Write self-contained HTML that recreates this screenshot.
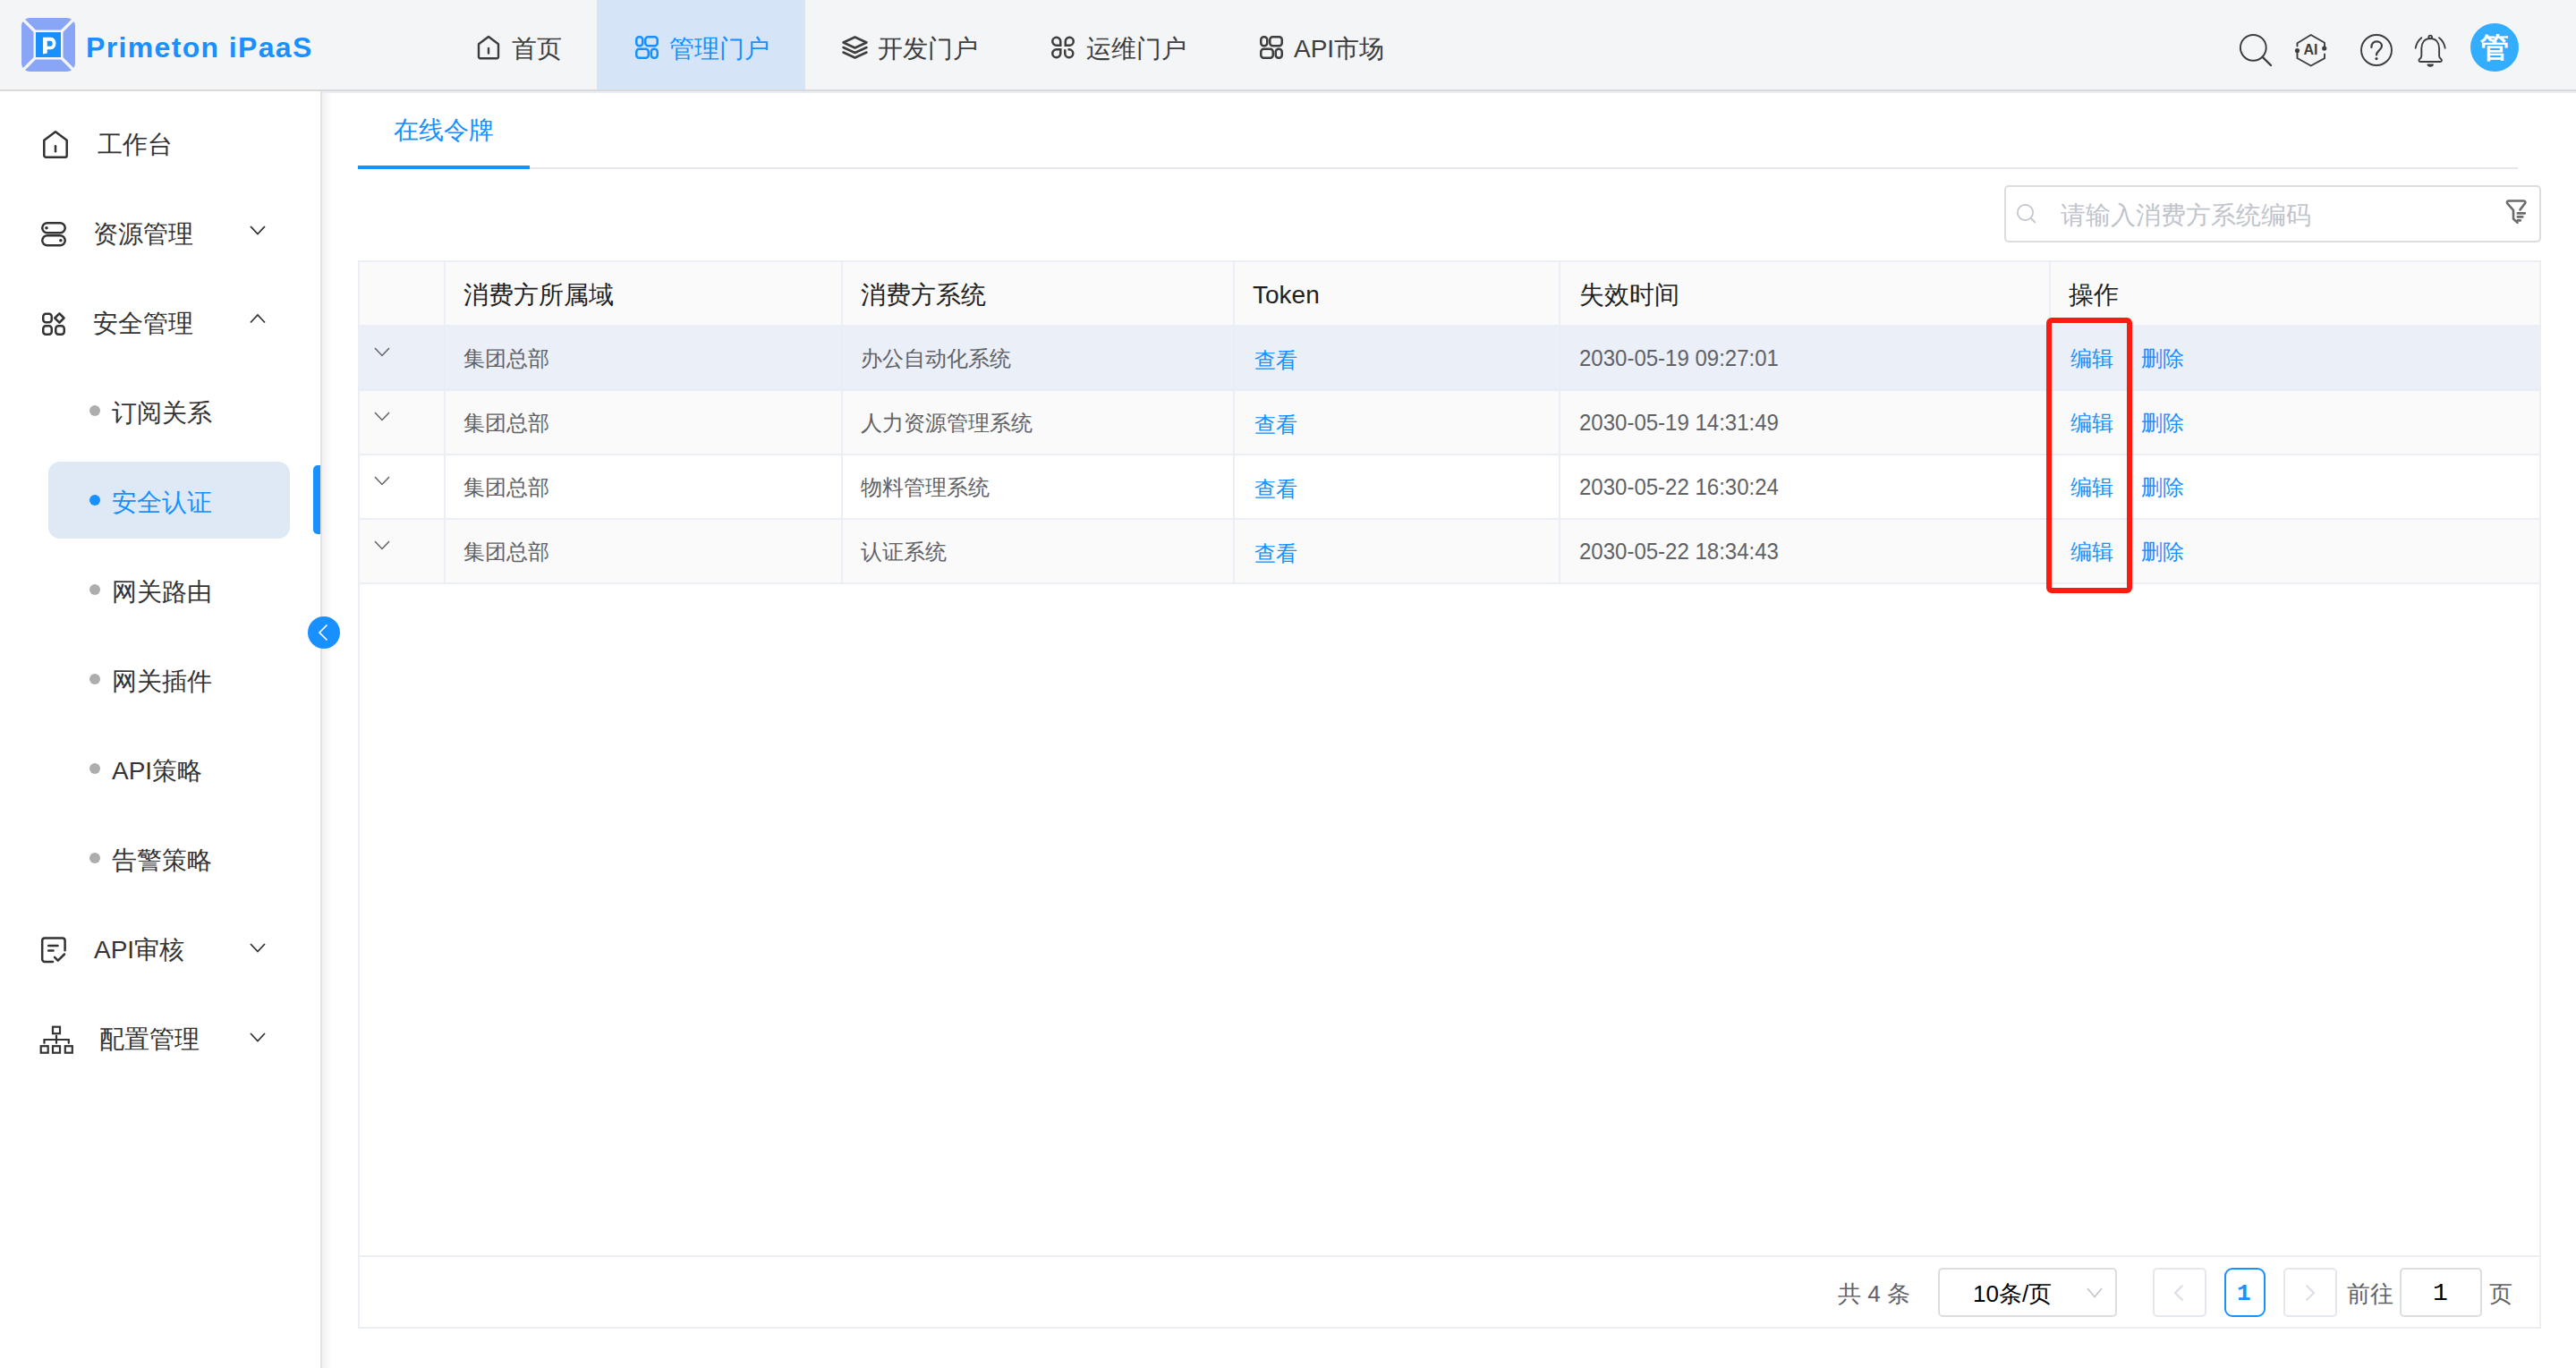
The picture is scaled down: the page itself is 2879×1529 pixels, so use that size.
<!DOCTYPE html>
<html><head><meta charset="utf-8">
<style>
*{margin:0;padding:0;box-sizing:border-box}
html,body{width:2879px;height:1529px;overflow:hidden;background:#fff;font-family:"Liberation Sans",sans-serif;color:#303133}
.abs{position:absolute}
.t{position:absolute;white-space:nowrap}
.f28{font-size:28px;line-height:28px}
.f24{font-size:24px;line-height:24px}
.f26{font-size:26px;line-height:26px}
.dot{position:absolute;width:12px;height:12px;border-radius:6px;background:#adadad}
svg{position:absolute;overflow:visible}
</style></head><body>

<div class="abs" style="left:0;top:0;width:2879px;height:100px;background:#f4f5f7"></div>
<div class="abs" style="left:0;top:100px;width:2879px;height:2px;background:#d9d9d9"></div>
<svg style="left:24px;top:20px" width="60" height="60" viewBox="0 0 60 60">
<rect x="0" y="0" width="60" height="60" rx="9" fill="#89a5f6"/>
<path d="M2 2 L58 58 M58 2 L2 58" stroke="#f4f5f7" stroke-width="3.2"/>
<rect x="13.5" y="13.5" width="33" height="33" fill="#f4f5f7"/>
<rect x="16" y="16" width="28" height="28" fill="#1890ff"/>
<path d="M24.1 21.8 H33 a5.5 6.7 0 0 1 0 13.4 H28.75 V39.6 L24.1 40.4 Z M28.75 25.7 V31.8 H32.2 a2.5 3.05 0 0 0 0 -6.1 Z" fill="#fff" fill-rule="evenodd"/>
</svg>
<div class="t" style="left:96px;top:37px;font-size:32px;line-height:32px;font-weight:bold;color:#1890ff;letter-spacing:1.35px">Primeton iPaaS</div>
<div class="abs" style="left:667px;top:0;width:233px;height:100px;background:#d5e5f7"></div>
<svg style="left:533px;top:39px" width="26" height="28" viewBox="0 0 26 28">
<path d="M2 10.2 L13 2 L24 10.2 V24.5 a1.8 1.8 0 0 1 -1.8 1.8 H3.8 a1.8 1.8 0 0 1 -1.8 -1.8 Z" fill="none" stroke="#3d3d3d" stroke-width="2.4" stroke-linejoin="round"/>
<path d="M13 15 V20.5" stroke="#3d3d3d" stroke-width="2.4" stroke-linecap="round"/>
</svg>
<div class="t f28" style="left:572px;top:41px;color:#3d3d3d">首页</div>
<svg style="left:710px;top:40px" width="26" height="26" viewBox="0 0 26 26">
<g fill="none" stroke="#1890ff" stroke-width="2.5">
<rect x="1.25" y="1.25" width="7" height="10" rx="3.2"/>
<rect x="11.25" y="1.25" width="13.5" height="10" rx="3.2"/>
<rect x="1.25" y="14.75" width="13.5" height="10" rx="3.2"/>
<rect x="17.75" y="14.75" width="7" height="10" rx="3.2"/>
</g></svg>
<div class="t f28" style="left:748px;top:41px;color:#1890ff">管理门户</div>
<svg style="left:941px;top:40px" width="29" height="26" viewBox="0 0 29 26">
<g fill="none" stroke="#3d3d3d" stroke-width="2.5" stroke-linejoin="round" stroke-linecap="round">
<path d="M14.5 1.5 L27.5 7.5 L14.5 13.5 L1.5 7.5 Z"/>
<path d="M1.5 13 L14.5 19 L27.5 13"/>
<path d="M1.5 18.5 L14.5 24.5 L27.5 18.5"/>
</g></svg>
<div class="t f28" style="left:981px;top:41px;color:#3d3d3d">开发门户</div>
<svg style="left:1175px;top:40px" width="26" height="26" viewBox="0 0 26 26">
<g fill="none" stroke="#3d3d3d" stroke-width="2.5" stroke-linejoin="round">
<path d="M11.5 10.75 H5.75 a4.5 4.5 0 1 1 4.5 -4.5 V10.75"/>
<path d="M14.5 10.75 H20.25 a4.5 4.5 0 1 0 -4.5 -4.5 V10.75" transform="translate(0,0)"/>
<path d="M11.5 15.25 H5.75 a4.5 4.5 0 1 0 4.5 4.5 V15.25"/>
<path d="M15.25 15.25 V19.75 a4.5 4.5 0 1 0 4.5 -4.5 H18.5"/>
</g></svg>
<div class="t f28" style="left:1214px;top:41px;color:#3d3d3d">运维门户</div>
<svg style="left:1408px;top:40px" width="26" height="26" viewBox="0 0 26 26">
<g fill="none" stroke="#3d3d3d" stroke-width="2.5">
<rect x="1.25" y="1.25" width="7" height="10" rx="3.2"/>
<rect x="11.25" y="1.25" width="13.5" height="10" rx="3.2"/>
<rect x="1.25" y="14.75" width="13.5" height="10" rx="3.2"/>
<rect x="17.75" y="14.75" width="7" height="10" rx="3.2"/>
</g></svg>
<div class="t f28" style="left:1446px;top:41px;color:#3d3d3d">API市场</div>
<svg style="left:2500px;top:35px" width="42" height="42" viewBox="0 0 42 42">
<circle cx="18.3" cy="18.3" r="14.4" fill="none" stroke="#3d3d3d" stroke-width="2"/>
<path d="M28.8 28.8 L38 38" stroke="#3d3d3d" stroke-width="2.4" stroke-linecap="round"/>
</svg>
<svg style="left:2562px;top:35px" width="42" height="42" viewBox="0 0 42 42">
<g fill="none" stroke="#3d3d3d" stroke-width="1.9" stroke-linecap="round" stroke-linejoin="round">
<path d="M5.5 16.5 V13.3 L20.7 4 L36 12.8 V19"/>
<path d="M36 25.5 V30.2 L20.7 38.5 L5.5 30 V22"/>
</g>
<circle cx="5.5" cy="21.5" r="2.6" fill="#3d3d3d"/>
<circle cx="35.7" cy="19" r="2.6" fill="#3d3d3d"/>
<text x="20.5" y="26" text-anchor="middle" font-family="Liberation Sans" font-weight="bold" font-size="16" fill="#3d3d3d">AI</text>
</svg>
<svg style="left:2635px;top:35px" width="42" height="42" viewBox="0 0 42 42">
<circle cx="21" cy="21" r="17" fill="none" stroke="#3d3d3d" stroke-width="1.9"/>
<path d="M15.4 18 C15.2 13.5 18 11.3 21.2 11.3 C24.5 11.3 27 13.5 27 16.3 C27 18.5 25.8 19.6 24 21.3 C22 23.2 21 24 21 26.5" fill="none" stroke="#3d3d3d" stroke-width="2.2" stroke-linecap="round"/>
<circle cx="21" cy="30.6" r="1.6" fill="#3d3d3d"/>
</svg>
<svg style="left:2695px;top:35px" width="42" height="42" viewBox="0 0 42 42">
<g fill="none" stroke="#3d3d3d" stroke-width="1.9" stroke-linecap="round" stroke-linejoin="round">
<path d="M11.3 7.2 C8 9.8 5.6 13.5 4.7 18.7"/>
<path d="M31.1 7.2 C34.4 9.8 36.8 13.5 37.7 18.7"/>
<path d="M21.2 8 C14.5 8 11.3 13 11.3 19 V27.5 C11.3 29 10.5 30 9.2 31 C7.8 32.3 8.4 34 10.2 34 H32.2 C34 34 34.6 32.3 33.2 31 C31.9 30 31.1 29 31.1 27.5 V19 C31.1 13 27.9 8 21.2 8 Z"/>
<circle cx="21.2" cy="6.4" r="1.8"/>
</g>
<path d="M17.5 36.5 H24.9 A3.7 3.3 0 0 1 17.5 36.5 Z" fill="#3d3d3d"/>
</svg>
<div class="abs" style="left:2761px;top:26px;width:54px;height:54px;border-radius:27px;background:#33adff"></div>
<div class="t" style="left:2772px;top:37px;font-size:32px;line-height:32px;font-weight:bold;color:#fff">管</div>
<div class="abs" style="left:358px;top:102px;width:2px;height:1427px;background:#e2e2e2"></div>
<div class="abs" style="left:360px;top:102px;width:11px;height:1427px;background:linear-gradient(to right,#f1f1f1,rgba(255,255,255,0))"></div>
<svg style="left:47px;top:145px" width="30" height="33" viewBox="0 0 30 33">
<path d="M2.3 11.8 L15 2.3 L27.7 11.8 V28.8 a2 2 0 0 1 -2 2 H4.3 a2 2 0 0 1 -2 -2 Z" fill="none" stroke="#333333" stroke-width="2.5" stroke-linejoin="round"/>
<path d="M15 18.3 V24.3" stroke="#333333" stroke-width="2.5" stroke-linecap="round"/>
</svg>
<div class="t f28" style="left:109px;top:148px;color:#333333">工作台</div>
<svg style="left:45px;top:248px" width="30" height="28" viewBox="0 0 30 28">
<g fill="none" stroke="#333333" stroke-width="2.5">
<rect x="2.25" y="1.25" width="25.5" height="11" rx="5.5"/>
<rect x="2.25" y="15.25" width="25.5" height="11" rx="5.5"/>
</g>
<circle cx="7" cy="6.8" r="1.8" fill="#333333"/>
<circle cx="22.9" cy="20.7" r="1.8" fill="#333333"/>
</svg>
<div class="t f28" style="left:104px;top:248px;color:#333333">资源管理</div>
<svg style="left:279px;top:252px" width="18" height="10" viewBox="0 0 18 10"><path d="M1 1 L9.0 9.5 L17 1" fill="none" stroke="#333" stroke-width="1.8"/></svg>
<svg style="left:45px;top:348px" width="30" height="28" viewBox="0 0 30 28">
<g fill="none" stroke="#333333" stroke-width="2.5">
<rect x="3.25" y="2.75" width="9.5" height="9.5" rx="3"/>
<rect x="3.25" y="16.25" width="9.5" height="9.5" rx="3"/>
<rect x="17.25" y="16.25" width="9.5" height="9.5" rx="3"/>
<path d="M21.4 2.4 L26.5 7.5 L21.4 12.6 L16.3 7.5 Z" stroke-linejoin="round"/>
</g></svg>
<div class="t f28" style="left:104px;top:348px;color:#333333">安全管理</div>
<svg style="left:279px;top:351px" width="18" height="10" viewBox="0 0 18 10"><path d="M1 9.5 L9.0 1 L17 9.5" fill="none" stroke="#333" stroke-width="1.8"/></svg>
<div class="abs" style="left:54px;top:516px;width:270px;height:86px;border-radius:13px;background:#dfe9f6"></div>
<div class="abs" style="left:350px;top:520px;width:8px;height:77px;border-radius:5px 0 0 5px;background:#1890ff"></div>
<div class="dot" style="left:100px;top:453px;background:#adadad"></div>
<div class="t f28" style="left:125px;top:448px;color:#333333">订阅关系</div>
<div class="dot" style="left:100px;top:553px;background:#1890ff"></div>
<div class="t f28" style="left:125px;top:548px;color:#1890ff">安全认证</div>
<div class="dot" style="left:100px;top:653px;background:#adadad"></div>
<div class="t f28" style="left:125px;top:648px;color:#333333">网关路由</div>
<div class="dot" style="left:100px;top:753px;background:#adadad"></div>
<div class="t f28" style="left:125px;top:748px;color:#333333">网关插件</div>
<div class="dot" style="left:100px;top:853px;background:#adadad"></div>
<div class="t f28" style="left:125px;top:848px;color:#333333">API策略</div>
<div class="dot" style="left:100px;top:953px;background:#adadad"></div>
<div class="t f28" style="left:125px;top:948px;color:#333333">告警策略</div>
<svg style="left:344px;top:689px" width="36" height="36" viewBox="0 0 36 36">
<circle cx="18" cy="18" r="18" fill="#1890ff"/>
<path d="M21.5 9.5 L13 18 L21.5 26.5" fill="none" stroke="#fff" stroke-width="1.7"/>
</svg>
<svg style="left:45px;top:1046px" width="30" height="32" viewBox="0 0 30 32">
<g fill="none" stroke="#333333" stroke-width="2.5" stroke-linecap="round" stroke-linejoin="round">
<path d="M14 29 H5 a2.8 2.8 0 0 1 -2.8 -2.8 V5.2 A2.8 2.8 0 0 1 5 2.4 H24.8 a2.8 2.8 0 0 1 2.8 2.8 V16.2"/>
<path d="M9.2 11 H19.5"/>
<path d="M9.2 16.6 H14.5"/>
<path d="M16 23.8 L19.8 27.7 L27 20.5"/>
</g></svg>
<div class="t f28" style="left:105px;top:1048px;color:#333333">API审核</div>
<svg style="left:279px;top:1054px" width="18" height="10" viewBox="0 0 18 10"><path d="M1 1 L9.0 9.5 L17 1" fill="none" stroke="#333" stroke-width="1.8"/></svg>
<svg style="left:44px;top:1146px" width="38" height="32" viewBox="0 0 38 32">
<g fill="none" stroke="#333333" stroke-width="2.2">
<rect x="15" y="1.7" width="8" height="7.5"/>
<rect x="1.7" y="23.2" width="8" height="7.5"/>
<rect x="15" y="23.2" width="8" height="7.5"/>
<rect x="28.8" y="23.2" width="8" height="7.5"/>
<path d="M19 11.5 V19.8 M5.5 19.8 V16 H32.8 V19.8" stroke-linecap="round"/>
</g></svg>
<div class="t f28" style="left:111px;top:1148px;color:#333333">配置管理</div>
<svg style="left:279px;top:1154px" width="18" height="10" viewBox="0 0 18 10"><path d="M1 1 L9.0 9.5 L17 1" fill="none" stroke="#333" stroke-width="1.8"/></svg>
<div class="abs" style="left:360px;top:102px;width:2519px;height:2px;background:#e9edf5"></div>
<div class="t f28" style="left:440px;top:132px;color:#1890ff">在线令牌</div>
<div class="abs" style="left:400px;top:187px;width:2414px;height:2px;background:#e4e7ed"></div>
<div class="abs" style="left:400px;top:185px;width:192px;height:4px;background:#1890ff"></div>
<div class="abs" style="left:2240px;top:207px;width:600px;height:64px;border:2px solid #dcdddf;border-radius:5px;background:#fff"></div>
<svg style="left:2252px;top:226px" width="26" height="26" viewBox="0 0 26 26">
<circle cx="11.5" cy="11.5" r="8.6" fill="none" stroke="#c0c4cc" stroke-width="1.7"/>
<path d="M17.8 17.8 L22.3 22.3" stroke="#c0c4cc" stroke-width="1.9" stroke-linecap="round"/>
</svg>
<div class="t f28" style="left:2303px;top:227px;color:#c0c4cc">请输入消费方系统编码</div>
<svg style="left:2799px;top:221px" width="28" height="32" viewBox="0 0 28 32">
<g fill="none" stroke="#6b6b6b" stroke-width="2.6" stroke-linecap="round" stroke-linejoin="round">
<path d="M14.5 27.8 L10 23.6 V14 L3.3 6.3 C2.5 5.2 3 3.5 4.5 3.5 H21.8 C23.3 3.5 23.8 5.2 23 6.3 L17.5 13.4"/>
<path d="M14.8 17.4 H22.8 M14.8 21.4 H20.3 M14.8 25.4 H17.8"/>
</g></svg>
<div class="abs" style="left:400px;top:291px;width:2440px;height:1194px;border:2px solid #ebeef5"></div>
<div class="abs" style="left:402px;top:293px;width:2436px;height:70px;background:#fafafa"></div>
<div class="abs" style="left:402px;top:363px;width:2436px;height:2px;background:#ebeef5"></div>
<div class="abs" style="left:402px;top:365px;width:2436px;height:70px;background:#ebeff8"></div>
<div class="abs" style="left:402px;top:435px;width:2436px;height:2px;background:#e9edf6"></div>
<div class="abs" style="left:402px;top:437px;width:2436px;height:70px;background:#fafafa"></div>
<div class="abs" style="left:402px;top:507px;width:2436px;height:2px;background:#ebeef5"></div>
<div class="abs" style="left:402px;top:509px;width:2436px;height:70px;background:#ffffff"></div>
<div class="abs" style="left:402px;top:579px;width:2436px;height:2px;background:#ebeef5"></div>
<div class="abs" style="left:402px;top:581px;width:2436px;height:70px;background:#fafafa"></div>
<div class="abs" style="left:402px;top:651px;width:2436px;height:2px;background:#ebeef5"></div>
<div class="abs" style="left:496px;top:293px;width:2px;height:72px;background:#ebeef5"></div>
<div class="abs" style="left:496px;top:365px;width:2px;height:70px;background:#e9edf6"></div>
<div class="abs" style="left:496px;top:437px;width:2px;height:216px;background:#ebeef5"></div>
<div class="abs" style="left:940px;top:293px;width:2px;height:72px;background:#ebeef5"></div>
<div class="abs" style="left:940px;top:365px;width:2px;height:70px;background:#e9edf6"></div>
<div class="abs" style="left:940px;top:437px;width:2px;height:216px;background:#ebeef5"></div>
<div class="abs" style="left:1378px;top:293px;width:2px;height:72px;background:#ebeef5"></div>
<div class="abs" style="left:1378px;top:365px;width:2px;height:70px;background:#e9edf6"></div>
<div class="abs" style="left:1378px;top:437px;width:2px;height:216px;background:#ebeef5"></div>
<div class="abs" style="left:1742px;top:293px;width:2px;height:72px;background:#ebeef5"></div>
<div class="abs" style="left:1742px;top:365px;width:2px;height:70px;background:#e9edf6"></div>
<div class="abs" style="left:1742px;top:437px;width:2px;height:216px;background:#ebeef5"></div>
<div class="abs" style="left:2290px;top:293px;width:2px;height:72px;background:#ebeef5"></div>
<div class="abs" style="left:2290px;top:365px;width:2px;height:70px;background:#e9edf6"></div>
<div class="abs" style="left:2290px;top:437px;width:2px;height:216px;background:#ebeef5"></div>
<div class="t f28" style="left:518px;top:316px;color:#1f1f1f">消费方所属域</div>
<div class="t f28" style="left:962px;top:316px;color:#1f1f1f">消费方系统</div>
<div class="t f28" style="left:1400px;top:316px;color:#1f1f1f">Token</div>
<div class="t f28" style="left:1765px;top:316px;color:#1f1f1f">失效时间</div>
<div class="t f28" style="left:2312px;top:316px;color:#1f1f1f">操作</div>
<svg style="left:418px;top:388px" width="18" height="10" viewBox="0 0 18 10"><path d="M1 1 L9.0 9.5 L17 1" fill="none" stroke="#606266" stroke-width="1.5"/></svg>
<div class="t f24" style="left:518px;top:389px;color:#606266">集团总部</div>
<div class="t f24" style="left:962px;top:389px;color:#606266">办公自动化系统</div>
<div class="t f24" style="left:1402px;top:391px;color:#1890ff">查看</div>
<div class="t f24" style="left:1765px;top:387px;color:#606266;transform:scaleY(1.08);transform-origin:0 0">2030-05-19 09:27:01</div>
<div class="t f24" style="left:2314px;top:389px;color:#1890ff">编辑</div>
<div class="t f24" style="left:2393px;top:389px;color:#1890ff">删除</div>
<svg style="left:418px;top:460px" width="18" height="10" viewBox="0 0 18 10"><path d="M1 1 L9.0 9.5 L17 1" fill="none" stroke="#606266" stroke-width="1.5"/></svg>
<div class="t f24" style="left:518px;top:461px;color:#606266">集团总部</div>
<div class="t f24" style="left:962px;top:461px;color:#606266">人力资源管理系统</div>
<div class="t f24" style="left:1402px;top:463px;color:#1890ff">查看</div>
<div class="t f24" style="left:1765px;top:459px;color:#606266;transform:scaleY(1.08);transform-origin:0 0">2030-05-19 14:31:49</div>
<div class="t f24" style="left:2314px;top:461px;color:#1890ff">编辑</div>
<div class="t f24" style="left:2393px;top:461px;color:#1890ff">删除</div>
<svg style="left:418px;top:532px" width="18" height="10" viewBox="0 0 18 10"><path d="M1 1 L9.0 9.5 L17 1" fill="none" stroke="#606266" stroke-width="1.5"/></svg>
<div class="t f24" style="left:518px;top:533px;color:#606266">集团总部</div>
<div class="t f24" style="left:962px;top:533px;color:#606266">物料管理系统</div>
<div class="t f24" style="left:1402px;top:535px;color:#1890ff">查看</div>
<div class="t f24" style="left:1765px;top:531px;color:#606266;transform:scaleY(1.08);transform-origin:0 0">2030-05-22 16:30:24</div>
<div class="t f24" style="left:2314px;top:533px;color:#1890ff">编辑</div>
<div class="t f24" style="left:2393px;top:533px;color:#1890ff">删除</div>
<svg style="left:418px;top:604px" width="18" height="10" viewBox="0 0 18 10"><path d="M1 1 L9.0 9.5 L17 1" fill="none" stroke="#606266" stroke-width="1.5"/></svg>
<div class="t f24" style="left:518px;top:605px;color:#606266">集团总部</div>
<div class="t f24" style="left:962px;top:605px;color:#606266">认证系统</div>
<div class="t f24" style="left:1402px;top:607px;color:#1890ff">查看</div>
<div class="t f24" style="left:1765px;top:603px;color:#606266;transform:scaleY(1.08);transform-origin:0 0">2030-05-22 18:34:43</div>
<div class="t f24" style="left:2314px;top:605px;color:#1890ff">编辑</div>
<div class="t f24" style="left:2393px;top:605px;color:#1890ff">删除</div>
<div class="abs" style="left:2287px;top:355px;width:96px;height:308px;border:6px solid #ff1a0f;border-radius:6px"></div>
<div class="abs" style="left:402px;top:1403px;width:2436px;height:2px;background:#ebeef5"></div>
<div class="t f26" style="left:2054px;top:1433px;color:#606266">共 4 条</div>
<div class="abs" style="left:2166px;top:1417px;width:200px;height:55px;border:2px solid #dcdddf;border-radius:5px"></div>
<div class="t f26" style="left:2205px;top:1433px;color:#000">10条/页</div>
<svg style="left:2332px;top:1439px" width="18" height="11" viewBox="0 0 18 11"><path d="M1 1 L9.0 10.5 L17 1" fill="none" stroke="#c0c4cc" stroke-width="1.6"/></svg>
<div class="abs" style="left:2406px;top:1417px;width:60px;height:55px;border:2px solid #e4e7ed;border-radius:5px"></div>
<svg style="left:2428px;top:1435px" width="14" height="20" viewBox="0 0 14 20"><path d="M11.5 1.5 L3 10 L11.5 18.5" fill="none" stroke="#dcdfe6" stroke-width="2.2"/></svg>
<div class="abs" style="left:2486px;top:1417px;width:46px;height:55px;border:2px solid #1890ff;border-radius:9px"></div>
<div class="t" style="left:2500px;top:1433px;font-size:26px;line-height:26px;font-family:'Liberation Mono',monospace;font-weight:bold;color:#1890ff">1</div>
<div class="abs" style="left:2552px;top:1417px;width:60px;height:55px;border:2px solid #e4e7ed;border-radius:5px"></div>
<svg style="left:2575px;top:1435px" width="14" height="20" viewBox="0 0 14 20"><path d="M2.5 1.5 L11 10 L2.5 18.5" fill="none" stroke="#dcdfe6" stroke-width="2.2"/></svg>
<div class="t f26" style="left:2623px;top:1433px;color:#606266">前往</div>
<div class="abs" style="left:2682px;top:1417px;width:92px;height:55px;border:2px solid #dcdddf;border-radius:5px"></div>
<div class="t" style="left:2719px;top:1432px;font-size:28px;line-height:28px;font-family:'Liberation Mono',monospace;color:#000">1</div>
<div class="t f26" style="left:2782px;top:1433px;color:#606266">页</div>
</body></html>
